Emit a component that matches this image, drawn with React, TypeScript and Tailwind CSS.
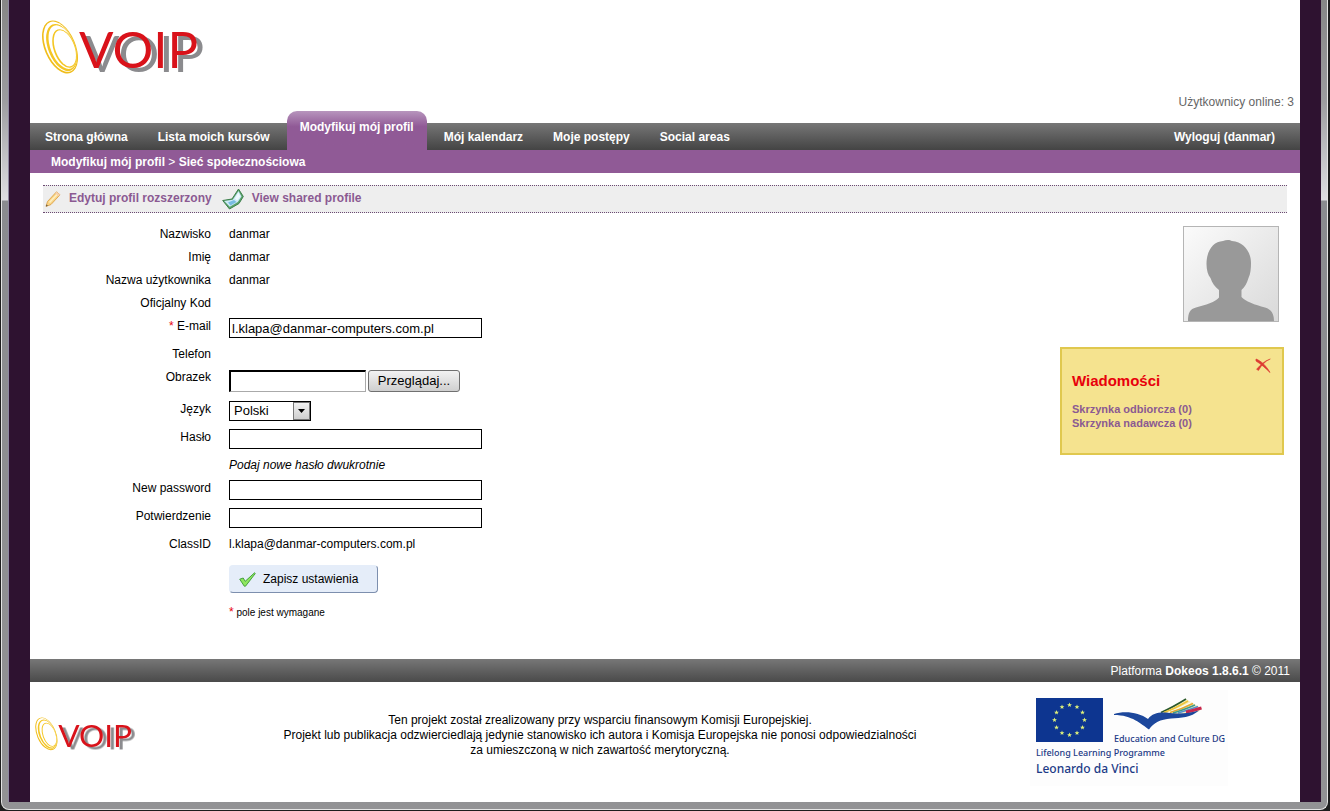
import { useRef, useState } from 'react';
import type { ReactNode } from 'react';

const NAV_LEFT = ['Strona główna', 'Lista moich kursów'];
const NAV_RIGHT = ['Mój kalendarz', 'Moje postępy', 'Social areas'];

const STARS = Array.from({ length: 12 }, (_, i) => {
  const angle = (i * Math.PI) / 6;
  return { x: 33.5 + 15 * Math.sin(angle), y: 22 - 15 * Math.cos(angle) };
});

function VoipLogo({ className }: { className: string }) {
  return (
    <svg viewBox="0 -4 168 66" className={className} role="img" aria-label="VOIP">
      <ellipse cx="20" cy="28" rx="15.500" ry="28" fill="#f0bd1a" transform="rotate(-23 20 28)" />
      <ellipse cx="20.300" cy="27.700" rx="14.200" ry="26.600" fill="#fff" transform="rotate(-23 20.300 27.700)" />
      <ellipse cx="21.600" cy="28.500" rx="13.400" ry="24.800" fill="#f4c623" transform="rotate(-22 21.600 28.500)" />
      <ellipse cx="22.500" cy="28.100" rx="11.900" ry="23" fill="#fff" transform="rotate(-22 22.500 28.100)" />
      <ellipse cx="24.500" cy="29.500" rx="10.800" ry="20.200" fill="#f4c623" transform="rotate(-20 24.500 29.500)" />
      <ellipse cx="24.900" cy="29.300" rx="9.600" ry="18.900" fill="#fff" transform="rotate(-20 24.900 29.300)" />
      <text
        x="39"
        y="49"
        fill="#d9121a"
        fontFamily="Lato, sans-serif"
        fontSize="51"
        className="[filter:drop-shadow(6px_4px_0_#8b8b8e)]"
      >
        VOIP
      </text>
    </svg>
  );
}

function PencilIcon() {
  return (
    <svg viewBox="0 0 16 16" className="h-4 w-4 shrink-0">
      <path d="M1 15.500 L2.500 10.500 L11.500 0.800 L15 3.800 L6 13.500 Z" fill="#f9d486" stroke="#d99a3c" strokeWidth="0.800" />
      <path d="M4.500 11.500 L12.500 3" stroke="#fdf0c4" strokeWidth="1.500" />
      <path d="M11.500 0.800 L15 3.800 L13.600 5.300 L10.200 2.300 Z" fill="#f6cfae" />
      <path d="M1 15.500 L1.600 13.500 L2.900 14.600 Z" fill="#444" />
    </svg>
  );
}

function SharedProfileIcon() {
  return (
    <svg viewBox="0 0 22 22" className="h-[22px] w-[22px] shrink-0">
      <path d="M0.700 12.500 L10 11 L16.500 1 L21.300 8.500 L17 15.500 L7.500 21 Z" fill="#5aa36a" stroke="#3d7f4c" strokeLinejoin="round" />
      <path d="M2.200 12.900 L10.700 11.800 L16.500 3 L19.500 8.500 L15.800 14 L7.800 18.700 Z" fill="#cdeaf7" />
      <path d="M6 14.500 L12 12 L14.500 14 L8.500 17.500 Z" fill="#79bce2" />
      <path d="M16.300 4.500 L18.200 8.500 L15.200 12.500 L13 10.500 Z" fill="#eef9fd" />
    </svg>
  );
}

function CheckIcon() {
  return (
    <svg viewBox="0 0 17 15" className="h-[15px] w-[17px] shrink-0">
      <path
        d="M0.700 7.200 L4.200 6 L6.200 9.300 L15.500 0.800 L16.300 1.500 L6.500 14.200 L5.300 14.200 Z"
        fill="#8fe65f"
        stroke="#3b9a35"
        strokeWidth="0.900"
        strokeLinejoin="round"
      />
    </svg>
  );
}

function CloseIcon() {
  return (
    <svg viewBox="0 0 16 16" className="h-4 w-4">
      <path d="M1 2 C6 4 11 8.500 15 15.500 C11 11.500 6 7 1 4 Z" fill="#dd3a32" stroke="#dd3a32" strokeWidth="0.700" />
      <path d="M15.300 2 C10.500 4 6.500 8 3.500 13.500 L1.500 12.300 C5.500 7.500 10 3.500 15.300 2 Z" fill="#dd3a32" stroke="#dd3a32" strokeWidth="0.500" />
    </svg>
  );
}

function Avatar() {
  return (
    <svg viewBox="0 0 96 96" className="h-24 w-24" role="img" aria-label="danmar">
      <defs>
        <linearGradient id="avatar-bg" x1="0" y1="0" x2="1" y2="1">
          <stop offset="0" stopColor="#fbfbfb" />
          <stop offset="1" stopColor="#d9d9d9" />
        </linearGradient>
      </defs>
      <rect x="0.500" y="0.500" width="95" height="95" fill="url(#avatar-bg)" stroke="#b5b5b5" />
      <path
        d="M5 95 C5 87 7 83 13 81.500 C22 79 33 76 36 71.500 L36 64 C32 61 29 57 27.500 52 C25 49 23.500 44 23.500 38 C23.500 25 30 15.500 40 15 C43 13.500 47 13.500 49 15 C61 16 68 26 68 37 C68 42 67.500 48 65.500 52 C64 57 62 61 58.500 64 L58.500 71 C62 75 72 79 82 81.500 C88 83 91 88 91 95 Z"
        fill="#999"
      />
    </svg>
  );
}

function EuFlag() {
  return (
    <svg viewBox="0 0 67 44" className="h-11 w-[67px] shrink-0" role="img" aria-label="European Union">
      <rect width="67" height="44" fill="#0d3590" />
      {STARS.map(({ x, y }) => (
        <path
          key={`${x}-${y}`}
          transform={`translate(${x} ${y})`}
          d="M0 -2.500 L0.700 -0.800 L2.400 -0.800 L1 0.400 L1.500 2.100 L0 1.100 L-1.500 2.100 L-1 0.400 L-2.400 -0.800 L-0.700 -0.800 Z"
          fill="#dff07a"
        />
      ))}
    </svg>
  );
}

function CultureBird() {
  return (
    <svg viewBox="0 0 88 32" className="h-8 w-[88px]">
      <path d="M46 15 L72 1 L88 10.500 L84 14 L60 17 Z" fill="#f8eec0" />
      <g fill="none" strokeWidth="1.600">
        <path d="M47 14.500 C56 10.500 64 6 72 1" stroke="#2b5a2e" />
        <path d="M50 14.500 C59 11.500 67 7 74 3" stroke="#eec53a" strokeWidth="1.800" />
        <path d="M54 14.500 C63 11.500 70 8 77 4.500" stroke="#fff" strokeWidth="1" />
        <path d="M56 14.500 C65 12 72 9 79 5.500" stroke="#e2a832" strokeWidth="1.500" />
        <path d="M59 15 C68 12.500 74 10 81 7" stroke="#3d9a8b" />
        <path d="M64 15 C71 13 77 11 84 8.500" stroke="#4f8fd0" strokeWidth="1.400" />
        <path d="M72 14 C78 13 82 11.500 87.500 10" stroke="#c8274e" strokeWidth="3" />
      </g>
      <path
        d="M0 16 C10 12.500 25 14 34 21 C38 15 45 14 52 14.500 C62 16 74 16 85 12.500 C77 19.500 67 20 57 20.500 C46 21.500 40 24.500 35 31.500 C27 26 18 17 0 17 Z"
        fill="#1c479c"
      />
    </svg>
  );
}

interface FormRowProps {
  label?: string;
  htmlFor?: string;
  required?: boolean;
  children?: ReactNode;
}

function FormRow({ label, htmlFor, required, children }: FormRowProps) {
  return (
    <div className="grid grid-cols-[168px_1fr] gap-x-[18px] pt-1 pb-[3px] leading-4">
      {label ? (
        <label htmlFor={htmlFor} className="text-right">
          {required && <span className="text-red-600">* </span>}
          {label}
        </label>
      ) : (
        <span />
      )}
      <div>{children}</div>
    </div>
  );
}

const FIELD = 'mb-px block h-5 w-[253px] border border-black bg-white px-0.5 text-[13px] outline-none';

export default function App() {
  const fileRef = useRef<HTMLInputElement>(null);
  const [fileName, setFileName] = useState('');
  const [email, setEmail] = useState('l.klapa@danmar-computers.com.pl');
  const [showMessages, setShowMessages] = useState(true);

  return (
    <div className="flex min-h-screen flex-col bg-[#1d1d1d] pr-0.5 pb-px pl-px font-['Liberation_Sans',Arial,sans-serif] text-xs text-black">
      {/* Window frame */}
      <div className="flex grow flex-col rounded-b-lg border-x border-b border-[#e4e4e4] bg-[linear-gradient(to_bottom,#868686_0,#9c9c9f_100px,#dedee2_200px,#8a8b8f_201px,#929294_100%)] px-[6px] pb-[7px]">
        <div className="flex grow flex-col border-l border-[#8d86a0] bg-[#2e1230] px-[21px]">
          <div className="flex grow flex-col bg-white">
            <header className="flex h-[123px] items-end justify-between pr-1.5 pl-2.5">
              <VoipLogo className="mb-[42px] h-[66px] w-[168px]" />
              <p className="mb-[13px] leading-4 text-[#666]">Użytkownicy online: 3</p>
            </header>

            {/* Main tabs */}
            <nav className="flex h-[27px] items-end bg-linear-to-b from-[#777] to-[#444] pr-[25px] font-bold text-white">
              {NAV_LEFT.map((item) => (
                <a key={item} href="#" className="px-[15px] pb-[5px] leading-4">
                  {item}
                </a>
              ))}
              <a
                href="#"
                className="mx-0.5 h-[39px] rounded-t-[10px] bg-linear-to-b from-[#b795bd] from-0% to-[#905a96] to-40% px-[13px] pt-2 leading-4"
              >
                Modyfikuj mój profil
              </a>
              {NAV_RIGHT.map((item) => (
                <a key={item} href="#" className="px-[15px] pb-[5px] leading-4">
                  {item}
                </a>
              ))}
              <a href="#" className="ml-auto pb-[5px] leading-4">
                Wyloguj (danmar)
              </a>
            </nav>

            <div className="bg-[#905a96] px-[21px] pt-1 pb-[3px] leading-4 font-bold text-white">
              <a href="#">Modyfikuj mój profil</a> <span className="font-normal">&gt;</span>{' '}
              <a href="#">Sieć społecznościowa</a>
            </div>

            <main className="px-[13px] pt-3">
              <div className="flex h-7 items-center border-y border-dotted border-[#6b4a72] bg-[#eee] pl-0.5 font-bold text-[#8b5a92]">
                <a href="#" className="flex items-center gap-2">
                  <PencilIcon />
                  <span className="pb-0.5 leading-4">Edytuj profil rozszerzony</span>
                </a>
                <a href="#" className="ml-2.5 flex items-center gap-2">
                  <SharedProfileIcon />
                  <span className="pb-0.5 leading-4">View shared profile</span>
                </a>
              </div>

              <div className="flex items-start justify-between pt-[9px]">
                <form onSubmit={(e) => e.preventDefault()}>
                  <FormRow label="Nazwisko">danmar</FormRow>
                  <FormRow label="Imię">danmar</FormRow>
                  <FormRow label="Nazwa użytkownika">danmar</FormRow>
                  <FormRow label="Oficjalny Kod" />
                  <FormRow label="E-mail" htmlFor="email" required>
                    <input
                      id="email"
                      type="text"
                      value={email}
                      onChange={(e) => setEmail(e.target.value)}
                      className={FIELD}
                    />
                  </FormRow>
                  <FormRow label="Telefon" />
                  <FormRow label="Obrazek" htmlFor="picture">
                    <div className="mb-px flex h-6 items-center gap-0.5">
                      <input
                        id="picture"
                        type="text"
                        readOnly
                        value={fileName}
                        className="h-[22px] w-[137px] border-t-2 border-r border-b border-l-2 border-t-black border-r-[#aaa] border-b-[#aaa] border-l-black bg-white px-0.5 text-[13px] outline-none"
                      />
                      <button
                        type="button"
                        onClick={() => fileRef.current?.click()}
                        className="h-[22px] w-[92px] rounded-[3px] border border-[#707070] bg-linear-to-b from-[#f2f2f2] to-[#cfcfcf] text-[13px] leading-4"
                      >
                        Przeglądaj...
                      </button>
                      <input
                        ref={fileRef}
                        type="file"
                        aria-label="Obrazek"
                        className="hidden"
                        onChange={(e) => setFileName(e.target.files?.[0]?.name ?? '')}
                      />
                    </div>
                  </FormRow>
                  <FormRow label="Język" htmlFor="language">
                    <div className="relative mb-px w-[82px]">
                      <select
                        id="language"
                        className="block h-5 w-full appearance-none border border-black bg-white pl-1 text-[13px] outline-none"
                      >
                        <option>Polski</option>
                        <option>English</option>
                      </select>
                      <span className="pointer-events-none absolute inset-y-px right-px flex w-[17px] items-center justify-center border border-[#777] bg-linear-to-b from-[#f2f2f2] to-[#cfcfcf]">
                        <svg viewBox="0 0 7 4" className="h-1 w-[7px]">
                          <path d="M0 0 H7 L3.500 4 Z" />
                        </svg>
                      </span>
                    </div>
                  </FormRow>
                  <FormRow label="Hasło" htmlFor="password">
                    <input id="password" type="password" className={FIELD} />
                  </FormRow>
                  <FormRow>
                    <em>Podaj nowe hasło dwukrotnie</em>
                  </FormRow>
                  <FormRow label="New password" htmlFor="new-password">
                    <input id="new-password" type="password" className={FIELD} />
                  </FormRow>
                  <FormRow label="Potwierdzenie" htmlFor="confirm-password">
                    <input id="confirm-password" type="password" className={FIELD} />
                  </FormRow>
                  <FormRow label="ClassID">l.klapa@danmar-computers.com.pl</FormRow>
                  <div className="pt-2.5 pl-[186px]">
                    <button
                      type="submit"
                      className="flex h-7 w-[149px] items-center gap-[7px] rounded border border-t-[#e5edf9] border-r-[#7d8fae] border-b-[#7d8fae] border-l-[#e5edf9] bg-[#e5edf9] pl-[9px]"
                    >
                      <CheckIcon />
                      Zapisz ustawienia
                    </button>
                    <p className="pt-[11px] text-[10px] leading-4">
                      <span className="text-xs text-red-600">*</span> pole jest wymagane
                    </p>
                  </div>
                </form>

                <aside className="flex w-[227px] flex-col items-end pt-1 pr-[3px]">
                  <div className="pr-[5px]">
                    <Avatar />
                  </div>
                  {showMessages && (
                    <section className="mt-[25px] h-[108px] w-full border-2 border-[#e0c84e] bg-[#f5e38f] pt-2 pr-[11px] pl-2.5">
                      <div className="flex justify-end">
                        <button type="button" aria-label="Zamknij" onClick={() => setShowMessages(false)}>
                          <CloseIcon />
                        </button>
                      </div>
                      <h2 className="text-[15px] leading-4 font-bold text-[#e8000b]">Wiadomości</h2>
                      <ul className="mt-[13px] text-[11px] leading-[14px] font-bold text-[#8b5a92]">
                        <li>
                          <a href="#">Skrzynka odbiorcza (0)</a>
                        </li>
                        <li>
                          <a href="#">Skrzynka nadawcza (0)</a>
                        </li>
                      </ul>
                    </section>
                  )}
                </aside>
              </div>
            </main>

            <footer className="mt-auto">
              <div className="bg-linear-to-b from-[#777] to-[#4a4a4a] pt-1 pr-2.5 pb-[3px] text-right leading-4 text-white">
                Platforma <a href="#" className="font-bold">Dokeos 1.8.6.1</a> © 2011
              </div>
              <div className="grid h-[120px] grid-cols-[200px_1fr_330px]">
                <VoipLogo className="mt-8 ml-1 h-[41px] w-[104px]" />
                <p className="pt-[31px] text-center leading-[15px]">
                  Ten projekt został zrealizowany przy wsparciu finansowym Komisji Europejskiej.
                  <br />
                  Projekt lub publikacja odzwierciedlają jedynie stanowisko ich autora i Komisja Europejska nie ponosi
                  odpowiedzialności
                  <br />
                  za umieszczoną w nich zawartość merytoryczną.
                </p>
                <div className="mt-2 ml-[60px] h-24 w-[198px] bg-[#fdfdfd] pt-2 pl-1.5 font-['Noto_Sans',sans-serif] text-[#1c3a86]">
                  <div className="flex gap-[11px]">
                    <EuFlag />
                    <div>
                      <CultureBird />
                      <p className="mt-[3px] text-[9px] leading-3 font-medium whitespace-nowrap">Education and Culture DG</p>
                    </div>
                  </div>
                  <p className="text-[9px] leading-4 font-medium">Lifelong Learning Programme</p>
                  <p className="text-xs leading-4 font-medium">Leonardo da Vinci</p>
                </div>
              </div>
            </footer>
          </div>
        </div>
      </div>
    </div>
  );
}
